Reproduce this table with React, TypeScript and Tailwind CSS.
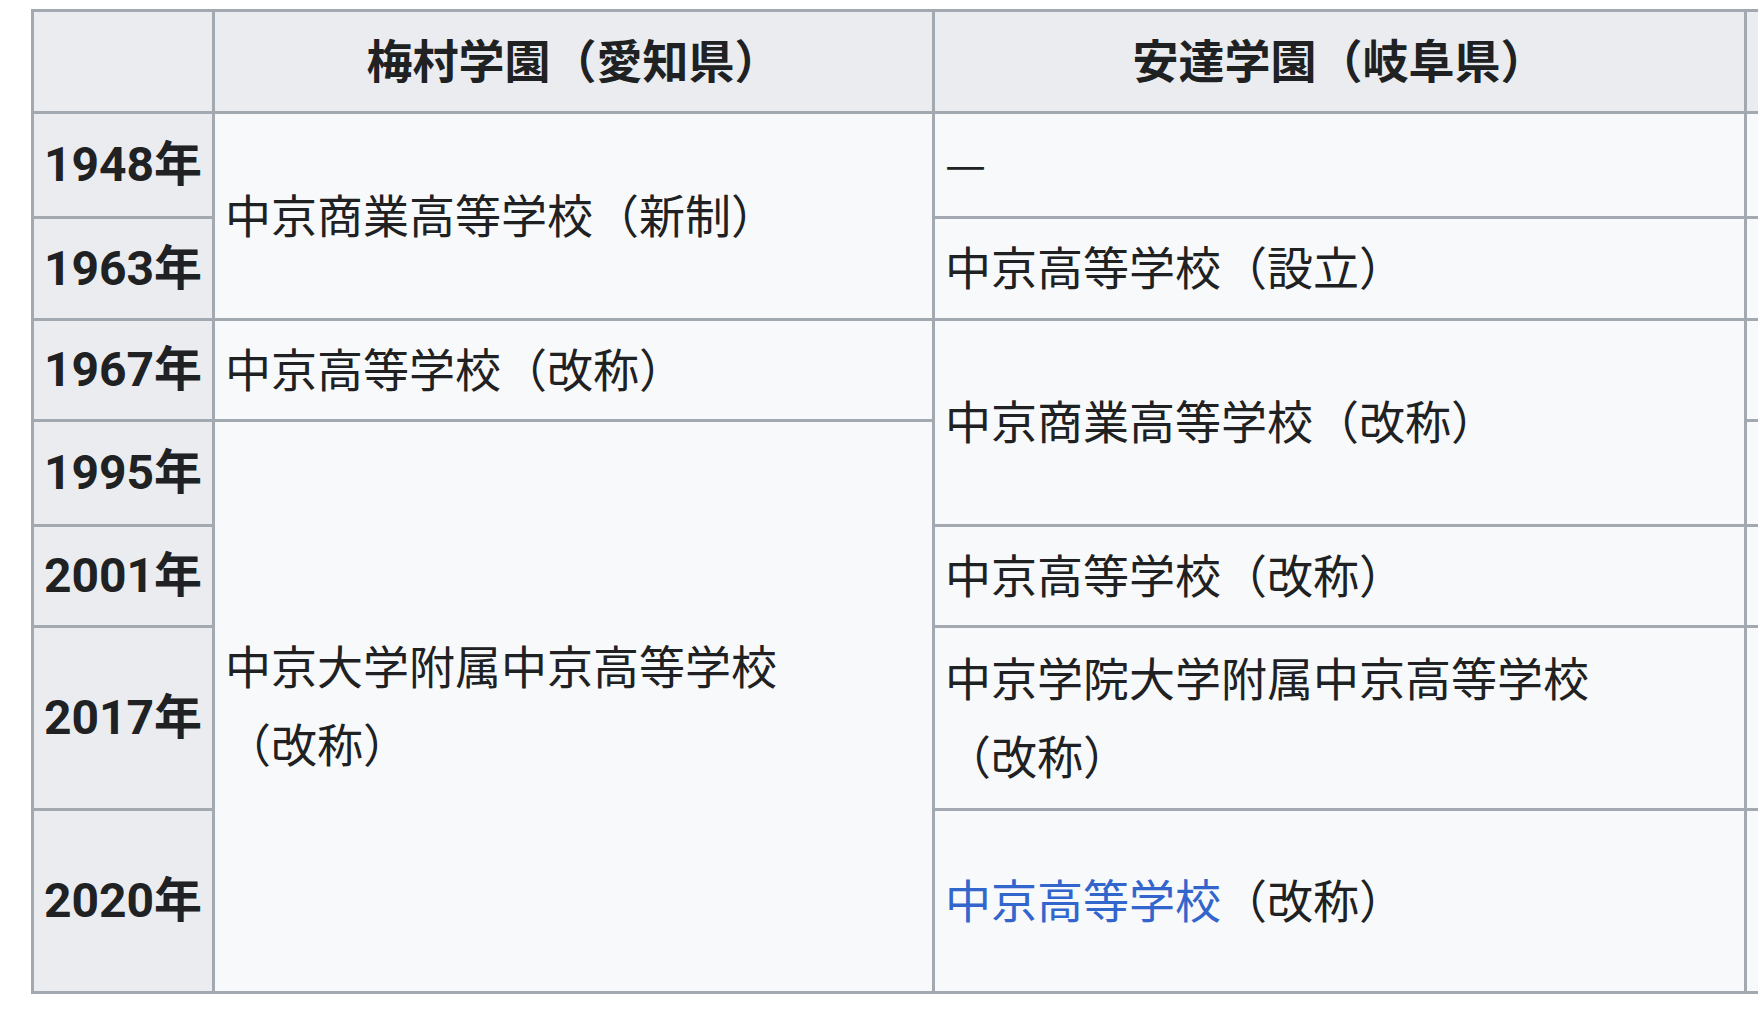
export default function App() {
  const cjk = "font-['Noto_Sans_CJK_JP',sans-serif]";
  const year = "border-[3px] border-[#a2a9b1] bg-[#eaecf0] text-center align-middle font-bold text-[48px] font-['Roboto','Noto_Sans_CJK_JP',sans-serif] px-[6px]";
  const cell = "border-[3px] border-[#a2a9b1] bg-[#f8f9fa] text-left align-middle px-[10px] pb-[7px]";
  const head = "border-[3px] border-[#a2a9b1] bg-[#eaecf0] text-center align-middle font-bold px-[10px] pb-[7px]";
  const kai = <span className="whitespace-nowrap">（改称）</span>;

  return (
    <div className={`w-[1758px] h-[1011px] overflow-hidden bg-white ${cjk}`}>
      <table className="ml-[31px] mt-[9px] w-[2200px] table-fixed border-collapse text-[46px] leading-[78px] text-[#202122]">
        <colgroup>
          <col className="w-[181px]" />
          <col className="w-[720px]" />
          <col className="w-[812px]" />
          <col className="w-[487px]" />
        </colgroup>
        <tbody>
          <tr className="h-[102px]">
            <th className={head}></th>
            <th className={head}>梅村学園（愛知県）</th>
            <th className={head}>安達学園（岐阜県）</th>
            <th className={head}></th>
          </tr>
          <tr className="h-[105px]">
            <th className={year}>1948年</th>
            <td className={cell} rowSpan={2}>
              中京商業高等学校<span className="whitespace-nowrap">（新制）</span>
            </td>
            <td className={cell}>
              <span className="relative -top-[1px]">—</span>
            </td>
            <td className={cell}></td>
          </tr>
          <tr className="h-[102px]">
            <th className={year}>1963年</th>
            <td className={cell}>
              中京高等学校<span className="whitespace-nowrap">（設立）</span>
            </td>
            <td className={cell}></td>
          </tr>
          <tr className="h-[101px]">
            <th className={year}>1967年</th>
            <td className={cell}>中京高等学校{kai}</td>
            <td className={cell} rowSpan={2}>
              中京商業高等学校{kai}
            </td>
            <td className={cell}></td>
          </tr>
          <tr className="h-[105px]">
            <th className={year}>1995年</th>
            <td className={cell} rowSpan={4}>
              中京大学附属中京高等学校{kai}
            </td>
            <td className={cell}></td>
          </tr>
          <tr className="h-[101px]">
            <th className={year}>2001年</th>
            <td className={cell}>中京高等学校{kai}</td>
            <td className={cell}></td>
          </tr>
          <tr className="h-[183px]">
            <th className={year}>2017年</th>
            <td className={cell}>中京学院大学附属中京高等学校{kai}</td>
            <td className={cell}></td>
          </tr>
          <tr className="h-[183px]">
            <th className={year}>2020年</th>
            <td className={cell}>
              <span className="text-[#3366cc]">中京高等学校</span>
              {kai}
            </td>
            <td className={cell}></td>
          </tr>
        </tbody>
      </table>
    </div>
  );
}
